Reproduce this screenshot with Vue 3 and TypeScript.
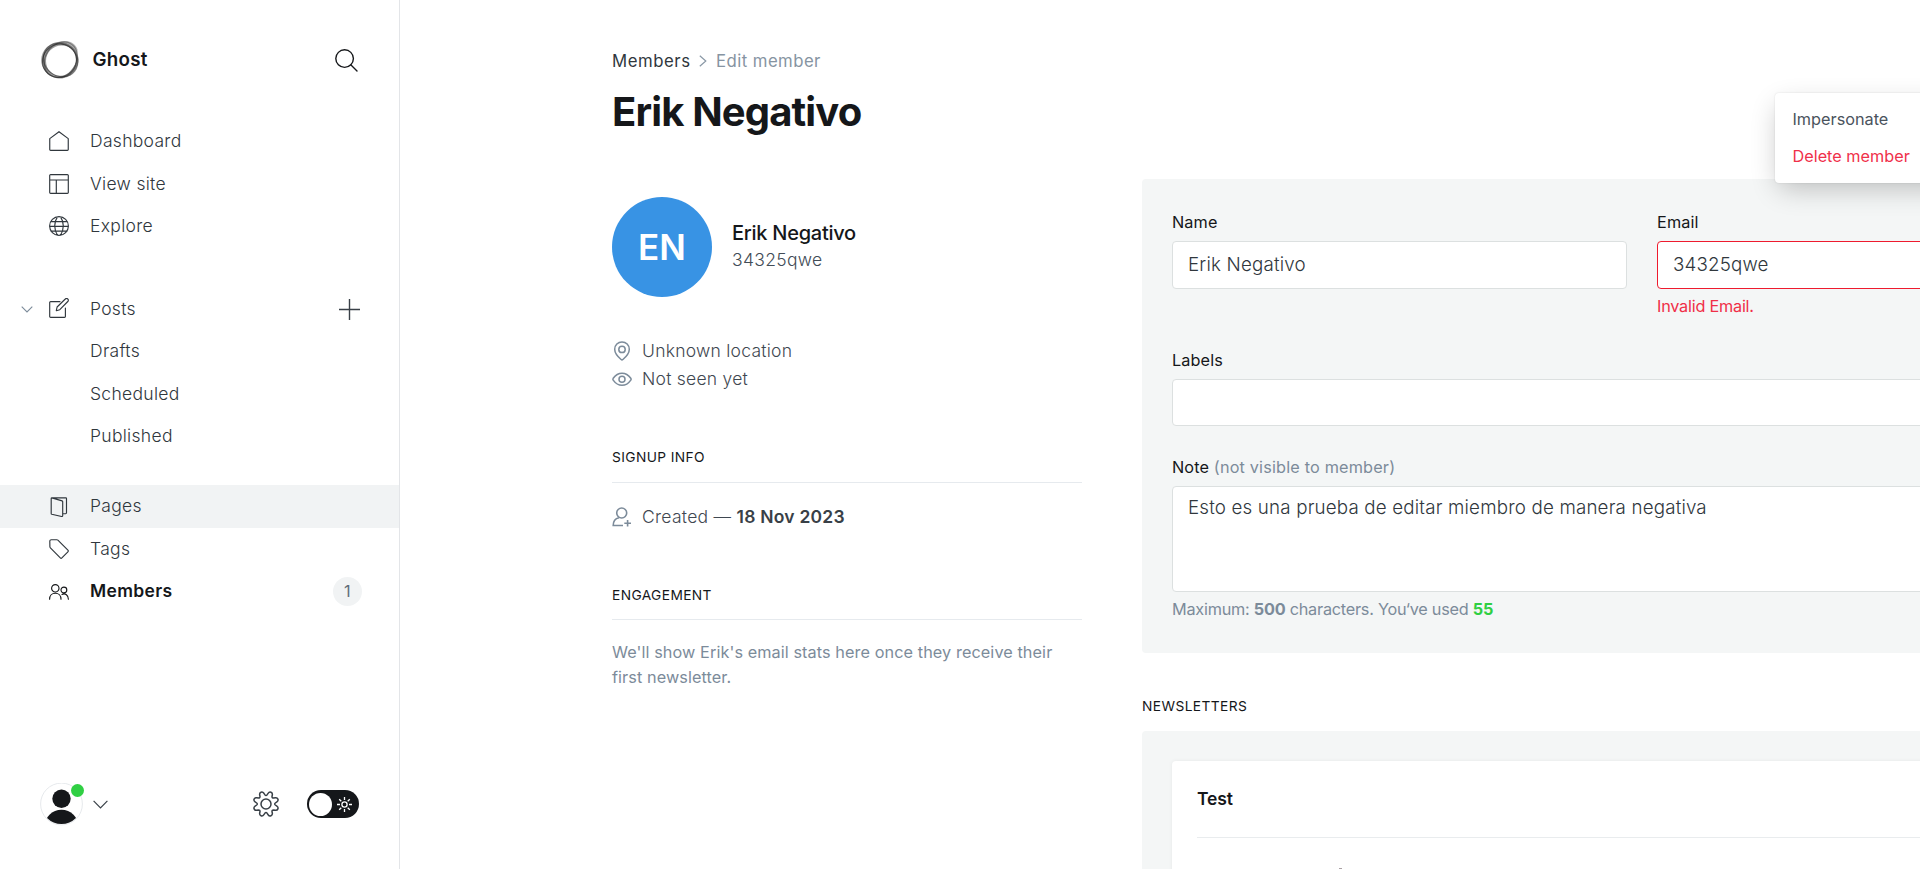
<script setup lang="ts">
import { ref } from 'vue'

interface NavItem {
  label: string
  icon?: string
  active?: boolean
  hovered?: boolean
  count?: number
  expandable?: boolean
}

const navGroups: NavItem[][] = [
  [
    { label: 'Dashboard', icon: 'home' },
    { label: 'View site', icon: 'site' },
    { label: 'Explore', icon: 'globe' },
  ],
  [
    { label: 'Posts', icon: 'posts', expandable: true },
    { label: 'Drafts' },
    { label: 'Scheduled' },
    { label: 'Published' },
  ],
  [
    { label: 'Pages', icon: 'pages', hovered: true },
    { label: 'Tags', icon: 'tag' },
    { label: 'Members', icon: 'members', active: true, count: 1 },
  ],
]

const icons: Record<string, string> = {
  home: 'M.75 7.6 10 .7l9.25 6.9v10.9a.8.8 0 0 1-.8.8H1.55a.8.8 0 0 1-.8-.8z',
  site: 'M1.6.6h16.8a.9.9 0 0 1 .9.9v16.9a.9.9 0 0 1-.9.9H1.6a.9.9 0 0 1-.9-.9V1.5a.9.9 0 0 1 .9-.9zM.7 6h18.6M7.3 6v13.3',
  globe:
    'M10 .6a9.4 9.4 0 1 0 0 18.8A9.4 9.4 0 0 0 10 .6zM1.7 5.6h16.6M.6 10.4h18.8M1.9 15.1h16.2M8.5.8C4.8 6 4.8 13.6 8.5 19.3M11.5.8c3.7 5.2 3.7 12.8 0 18.5',
  posts:
    'M11 3.600H1.6a.9.9 0 0 0-.9.9v13.900a.9.9 0 0 0 .9.9h13.900a.9.9 0 0 0 .9-.9V10M7.300 12.700l.8-3.700 8.200-8a1.7 1.7 0 0 1 2.5 0 1.7 1.7 0 0 1 0 2.5l-8 8.200z',
  pages:
    'M2.9.9h13.9a.7.7 0 0 1 .7.7v14.2a.9.9 0 0 1-.9.9h-2.5M2.9.9a.7.7 0 0 0-.7.7v14.9c0 .4.2.7.6.8l9.9 2.2c.6.1 1-.2 1-.7V4.7c0-.4-.2-.7-.6-.8z',
  tag: 'M.8 2.2A1.5 1.5 0 0 1 2.3.7h5.5c.4 0 .8.2 1.1.5l10 10c.5.5.5 1.1 0 1.6l-6 6.1c-.5.5-1.1.5-1.6 0l-9.9-10a1.8 1.8 0 0 1-.5-1.1z',
  members:
    'M6.3 2.600a3.700 3.700 0 1 0 0 7.400 3.700 3.700 0 0 0 0-7.400zM.6 17.200c0-3.500 2.300-6 5.700-6s5.700 2.500 5.700 6M14.900 5.100a2.900 2.900 0 1 0 0 5.800 2.900 2.900 0 0 0 0-5.800zM13 12.400c3.300-1.500 6.400.9 6.400 4.800',
}

const name = ref('Erik Negativo')
const email = ref('34325qwe')
const labels = ref('')
const note = ref('Esto es una prueba de editar miembro de manera negativa')
</script>

<template>
  <div class="app">
    <aside class="sidebar">
      <header class="brand">
        <svg class="logo" viewBox="0 0 38 38" fill="none">
          <path
            fill-rule="evenodd"
            fill="#333"
            opacity=".5"
            d="M18.500 1C28.500 1 37 8.500 37.300 18.500S29 37.500 19.500 37.500 0 29.500.2 19 9.500 1 18.500 1zM20.500 4.600C12 4.600 5 11.500 5 20s6.500 14.800 14.500 14.800S35 27.500 35 19 29 4.600 20.500 4.600z"
          />
          <ellipse cx="18.5" cy="19.8" rx="17.3" ry="16.4" transform="rotate(-38 18.5 19.8)" stroke="#222" stroke-width="1.1" opacity=".7" />
          <ellipse cx="19.8" cy="18.7" rx="18.8" ry="15.3" transform="rotate(-55 19.8 18.7)" stroke="#333" stroke-width="1.2" opacity=".5" />
          <ellipse cx="19.6" cy="19" rx="17.9" ry="16" transform="rotate(38 19.6 19)" stroke="#222" stroke-width="1.2" opacity=".5" />
          <path
            fill="#555"
            opacity=".45"
            d="M17 1C24-1.500 34 0 36.500 8.500v7.500C33.500 9 27 4.500 17 1zM37.500 15c1.300 10-4.500 18-13.500 20.500C30 30 35 24 37.500 15z"
          />
        </svg>
        <span class="brand-name">Ghost</span>
        <svg class="search" viewBox="0 0 23 23" fill="none" stroke="#15171a" stroke-width="1.4" stroke-linecap="round">
          <circle cx="9.6" cy="9.6" r="8.8" />
          <path d="m16 16 6 6" />
        </svg>
      </header>

      <nav class="nav">
        <ul v-for="(group, g) in navGroups" :key="g" class="group">
          <li v-for="item in group" :key="item.label" class="row" :class="{ hovered: item.hovered, active: item.active }">
            <span class="caret">
              <svg v-if="item.expandable" width="12" height="7" viewBox="0 0 12 7" fill="none" stroke="#7c8b9a" stroke-width="1.1">
                <path d="m.7.7 5.3 5.3L11.3.7" />
              </svg>
            </span>
            <span class="icon" :class="{ raised: item.expandable }">
              <svg v-if="item.icon" width="20" height="20" viewBox="0 0 20 20" fill="none" stroke="currentColor" stroke-width="1.15" stroke-linejoin="round" stroke-linecap="round">
                <path :d="icons[item.icon]" />
              </svg>
            </span>
            <span class="label">{{ item.label }}</span>
            <svg v-if="item.expandable" class="plus" width="21" height="21" viewBox="0 0 21 21" stroke="#394047" stroke-width="1.4">
              <path d="M10.5 0v21M0 10.5h21" />
            </svg>
            <span v-if="item.count" class="count">{{ item.count }}</span>
          </li>
        </ul>
      </nav>

      <footer class="foot">
        <span class="user">
          <svg width="43" height="43" viewBox="0 0 43 43">
            <defs>
              <clipPath id="user-disc"><circle cx="21.5" cy="20.5" r="20.5" /></clipPath>
            </defs>
            <circle cx="21.5" cy="21" r="20.9" fill="#fff" stroke="#e3e7ea" stroke-width=".9" />
            <g clip-path="url(#user-disc)" fill="#15171a">
              <circle cx="21.5" cy="15.8" r="9.2" />
              <ellipse cx="21.5" cy="43.5" rx="17" ry="16.7" />
            </g>
          </svg>
          <i class="online"></i>
        </span>
        <svg class="user-caret" width="15" height="9" viewBox="0 0 15 9" fill="none" stroke="#394047" stroke-width="1.2">
          <path d="m.6.9 6.9 6.9L14.4.9" />
        </svg>
        <svg class="gear" width="26" height="26" viewBox="0 0 26 26" fill="none" stroke="#394047" stroke-width="1.5" stroke-linejoin="round">
          <circle cx="13" cy="13" r="5" />
          <path d="M10.9 2.3 L12 3.9 Q13 5 14 3.9 L15.1 2.3 Q16.3.6 18 1.3 Q19.7 2 19.3 4 L19 5.5 Q18.9 7 20.5 7 L22.4 6.7 Q24.2 6.4 24.9 8.1 Q25.5 9.8 23.9 10.9 L22.3 12 Q21.1 13 22.3 14 L23.9 15.1 Q25.5 16.2 24.9 17.9 Q24.2 19.6 22.4 19.3 L20.5 19 Q18.9 19 19 20.5 L19.3 22 Q19.7 24 18 24.7 Q16.3 25.4 15.1 23.7 L14 22.1 Q13 21 12 22.1 L10.9 23.7 Q9.7 25.4 8 24.7 Q6.3 24 6.7 22 L7 20.5 Q7.1 19 5.5 19 L3.6 19.3 Q1.8 19.6 1.1 17.9 Q.5 16.2 2.1 15.1 L3.7 14 Q4.9 13 3.7 12 L2.1 10.9 Q.5 9.8 1.1 8.1 Q1.8 6.4 3.6 6.7 L5.5 7 Q7.1 7 7 5.5 L6.7 4 Q6.3 2 8 1.3 Q9.7.6 10.9 2.3z" />
        </svg>
        <span class="toggle">
          <i class="knob"></i>
          <svg width="15" height="15" viewBox="0 0 15 15" fill="none" stroke="#fff" stroke-width="1.3">
            <circle cx="7.5" cy="7.5" r="2.6" />
            <path d="M7.5 0v3M7.5 12v3M0 7.5h3M12 7.5h3M2.2 2.2l2.1 2.1M10.7 10.7l2.1 2.1M2.2 12.8l2.1-2.1M10.7 4.3l2.1-2.1" />
          </svg>
        </span>
      </footer>
    </aside>

    <main class="main">
      <div class="crumbs">
        <span class="crumb-link">Members</span>
        <svg width="8" height="12" viewBox="0 0 8 12" fill="none" stroke="#8a98a6" stroke-width="1.2"><path d="m.8.8 6 5.2-6 5.2" /></svg>
        <span class="crumb-here">Edit member</span>
      </div>
      <h1 class="title">Erik Negativo</h1>

      <div class="columns">
        <section class="profile">
          <div class="identity">
            <div class="avatar">EN</div>
            <div>
              <div class="member-name">Erik Negativo</div>
              <div class="member-email">34325qwe</div>
            </div>
          </div>
          <ul class="facts">
            <li>
              <svg width="20" height="20" viewBox="0 0 20 20" fill="none" stroke="#7c8b9a" stroke-width="1.5">
                <circle cx="10" cy="8.4" r="3.2" />
                <path d="M10 .9a7.3 7.3 0 0 0-7.3 7.3c0 3.8 2.6 7 6.4 10.3.5.4 1.3.4 1.8 0 3.8-3.3 6.4-6.5 6.4-10.3A7.3 7.3 0 0 0 10 .9z" />
              </svg>
              Unknown location
            </li>
            <li>
              <svg width="20" height="20" viewBox="0 0 20 20" fill="none" stroke="#7c8b9a" stroke-width="1.5">
                <circle cx="10" cy="10.2" r="3" />
                <path d="M1.2 9.3C6 2.4 14 2.4 18.8 9.3c.4.6.4 1.2 0 1.8-4.8 6.9-12.8 6.9-17.6 0-.4-.6-.4-1.2 0-1.8z" />
              </svg>
              Not seen yet
            </li>
          </ul>

          <h4 class="section-title">Signup info</h4>
          <p class="created">
            <svg width="20" height="20" viewBox="0 0 20 20" fill="none" stroke="#7c8b9a" stroke-width="1.6">
              <circle cx="9.7" cy="6" r="5" />
              <path d="M11 18.5H1.2c0-4.3 1.9-7 5.8-7.8M15.6 13v6.6M12.3 16.3h6.7" />
            </svg>
            <span>Created — <b>18 Nov 2023</b></span>
          </p>

          <h4 class="section-title engagement">Engagement</h4>
          <p class="stats-note">We'll show Erik's email stats here once they receive their first newsletter.</p>
        </section>

        <section class="details">
          <div class="panel form">
            <div class="pair">
              <label class="field">
                <span class="caption">Name</span>
                <input v-model="name" class="control" type="text" />
              </label>
              <label class="field">
                <span class="caption">Email</span>
                <input v-model="email" class="control invalid" type="text" />
                <span class="error">Invalid Email.</span>
              </label>
            </div>
            <label class="field labels">
              <span class="caption">Labels</span>
              <input v-model="labels" class="control" type="text" />
            </label>
            <label class="field">
              <span class="caption note">Note <em>(not visible to member)</em></span>
              <textarea v-model="note" class="control area"></textarea>
            </label>
            <p class="counter">Maximum: <b>500</b> characters. You‘ve used <b class="used">{{ note.length }}</b></p>
          </div>

          <h4 class="news-title">Newsletters</h4>
          <div class="panel news">
            <div class="card">
              <div class="news-row">Test</div>
              <div class="hint"><i></i></div>
            </div>
          </div>
        </section>
      </div>

      <ul class="menu">
        <li>Impersonate</li>
        <li class="danger">Delete member</li>
      </ul>
    </main>
  </div>
</template>

<style>
html,
body {
  margin: 0;
  overflow: hidden;
}
</style>

<style scoped>
.app {
  display: flex;
  position: relative;
  width: 100vw;
  height: 100vh;
  overflow: hidden;
  background: #fff;
  color: #15171a;
  font: 400 17.5px/1.5 Inter, 'Open Sans', sans-serif;
}
.app * { box-sizing: border-box; }
ul, h1, h4, p { margin: 0; padding: 0; list-style: none; }
svg { display: block; flex: none; }

.sidebar {
  flex: none;
  display: flex;
  flex-direction: column;
  width: 400px;
  border-right: 1px solid #e3e5e8;
}
.brand {
  display: flex;
  align-items: center;
  padding: 41px 41px 0 41px;
}
.logo { width: 38px; height: 38px; overflow: visible; }
.brand-name {
  margin-left: 13.5px;
  flex: 1;
  font-size: 18.75px;
  font-weight: 600;
  line-height: 38px;
  letter-spacing: 0.25px;
}
.search { width: 23px; height: 23px; }
.nav { padding-top: 40.9px; }
.group + .group { margin-top: 40.4px; }
.group + .group + .group { margin-top: 27.5px; }
.row {
  display: flex;
  align-items: center;
  height: 42.5px;
  padding-right: 37px;
  color: #30373d;
  font-weight: 350;
  letter-spacing: 0.3px;
}
.row.hovered { background: #f1f3f4; }
.row.active { color: #15171a; }
.row.active .label { font-weight: 600; letter-spacing: 0.34px; }
.caret { width: 28px; margin-left: 21px; }
.icon { width: 20px; margin-right: 21px; }
.icon.raised { margin-top: -2px; }
.label { flex: 1; }
.plus { margin-right: 2px; }
.count {
  width: 29px;
  height: 29px;
  border-radius: 50%;
  background: #f1f3f4;
  color: #626d79;
  font-size: 16.25px;
  font-weight: 400;
  line-height: 29px;
  text-align: center;
}
.foot {
  display: flex;
  align-items: center;
  height: 44px;
  margin-top: auto;
  margin-bottom: 43px;
  padding: 0 40px;
}
.user { position: relative; width: 43px; height: 43px; }
.online {
  position: absolute;
  top: 1.5px;
  left: 31px;
  width: 13px;
  height: 13px;
  border-radius: 50%;
  background: #30cf43;
}
.user-caret { margin-left: 10px; }
.gear { margin-left: auto; }
.toggle {
  display: flex;
  align-items: center;
  width: 52px;
  height: 28px;
  margin-left: 28px;
  padding: 0 7px 0 2px;
  border-radius: 14px;
  background: #15171a;
}
.knob { width: 23px; height: 23px; margin-right: auto; border-radius: 50%; background: #fff; }

.main {
  flex: 1;
  min-width: 0;
  padding: 50.7px 0 0 212px;
}
.crumbs {
  display: flex;
  align-items: center;
  height: 20px;
  font-size: 16.75px;
  line-height: 20px;
  white-space: nowrap;
}
.crumbs svg { margin: 1px 9px 0 8.5px; }
.crumb-link { color: #30373d; letter-spacing: 0.55px; }
.crumb-here { color: #8694a2; letter-spacing: 0.43px; }
.title {
  margin: 17px 0 0;
  font-size: 40px;
  font-weight: 700;
  line-height: 48px;
  letter-spacing: -0.85px;
  white-space: nowrap;
}
.columns {
  display: grid;
  grid-template-columns: 470px 1000px;
  gap: 60px;
  margin-top: 43.3px;
}
.profile { padding-top: 18px; }
.identity { display: flex; align-items: center; line-height: 27px; }
.avatar {
  width: 100px;
  height: 100px;
  margin-right: 20px;
  border-radius: 50%;
  background: #3893e4;
  color: #fff;
  font-size: 35px;
  font-weight: 600;
  line-height: 100px;
  text-align: center;
}
.member-name { font-size: 20px; font-weight: 500; letter-spacing: -0.26px; }
.member-email { margin-top: -1px; padding-bottom: 1px; color: #424c56; font-weight: 350; letter-spacing: 0.32px; }
.facts {
  margin-top: 40px;
  color: #3f4851;
  font-weight: 350;
  line-height: 28px;
  letter-spacing: 0.25px;
}
.facts li { display: flex; align-items: center; gap: 10px; }
.section-title {
  margin-top: 54px;
  padding-bottom: 15px;
  border-bottom: 1px solid #e6eaee;
  font-size: 13.75px;
  font-weight: 400;
  line-height: 20px;
  letter-spacing: 0.38px;
  text-transform: uppercase;
}
.created {
  display: flex;
  align-items: center;
  gap: 10px;
  margin-top: 21.7px;
  color: #3f4851;
  font-weight: 350;
  line-height: 24px;
  letter-spacing: 0.28px;
}
.created b { color: #394047; font-weight: 600; letter-spacing: 0.22px; }
.section-title.engagement { margin-top: 56.3px; padding-bottom: 14px; }
.stats-note {
  margin-top: 20.2px;
  color: #7c8b9a;
  font-size: 16.25px;
  line-height: 24.9px;
  letter-spacing: 0.08px;
}

.panel { border-radius: 4px; background: #f4f6f6; }
.form { height: 474px; padding: 32px 30px 0; }
.pair { display: grid; grid-template-columns: 455px 455px; gap: 30px; height: 138px; }
.field { display: flex; flex-direction: column; }
.caption {
  height: 30px;
  font-size: 16.25px;
  line-height: 23px;
  letter-spacing: 0.12px;
}
.caption em { color: #7c8b9a; font-style: normal; letter-spacing: 0.17px; }
.control {
  width: 100%;
  height: 48px;
  padding: 0 15px;
  border: 1px solid #dce0e0;
  border-radius: 4px;
  outline: none;
  background: #fff;
  color: #30373d;
  font: 350 18.75px/46px Inter, sans-serif;
  letter-spacing: 0.17px;
}
.control.invalid { border-color: #ee1b2e; }
.error {
  padding-top: 5.5px;
  color: #f02f48;
  font-size: 16.25px;
  line-height: 24px;
  letter-spacing: -0.23px;
}
.labels { height: 107px; }
.labels .control { height: 47px; }
.control.area {
  display: block;
  height: 106px;
  padding: 8px 15px;
  line-height: 26px;
  resize: none;
}
.counter {
  padding-top: 5.3px;
  color: #7c8b9a;
  font-size: 16.25px;
  line-height: 24px;
  letter-spacing: -0.24px;
}
.counter b { font-weight: 700; }
.counter .used { color: #30cf43; }
.news-title {
  margin: 43px 0 15px;
  font-size: 13.75px;
  font-weight: 400;
  line-height: 20px;
  letter-spacing: 0.41px;
  text-transform: uppercase;
}
.news { height: 400px; padding: 30px; }
.card {
  height: 340px;
  padding: 0 25px;
  border-radius: 4px;
  background: #fff;
  box-shadow: 0 0 4px rgba(0, 0, 0, 0.06);
}
.news-row {
  height: 77px;
  border-bottom: 1px solid #e9ecee;
  font-weight: 600;
  line-height: 76px;
  letter-spacing: -0.1px;
}
.hint { display: flex; padding: 30px 0 0 142px; }
.hint i { width: 3px; height: 1px; background: #a9a0a4; }

.menu {
  position: absolute;
  top: 93px;
  left: 1775px;
  width: 220px;
  height: 90px;
  padding: 8px 17.5px;
  border-radius: 4px;
  background: #fff;
  box-shadow: 0 0 2px rgba(0, 0, 0, 0.13), 0 9px 26px -4px rgba(0, 0, 0, 0.24);
  color: #4a535c;
  font-size: 16.25px;
  line-height: 37.4px;
}
.menu .danger { color: #f0304a; }
</style>
